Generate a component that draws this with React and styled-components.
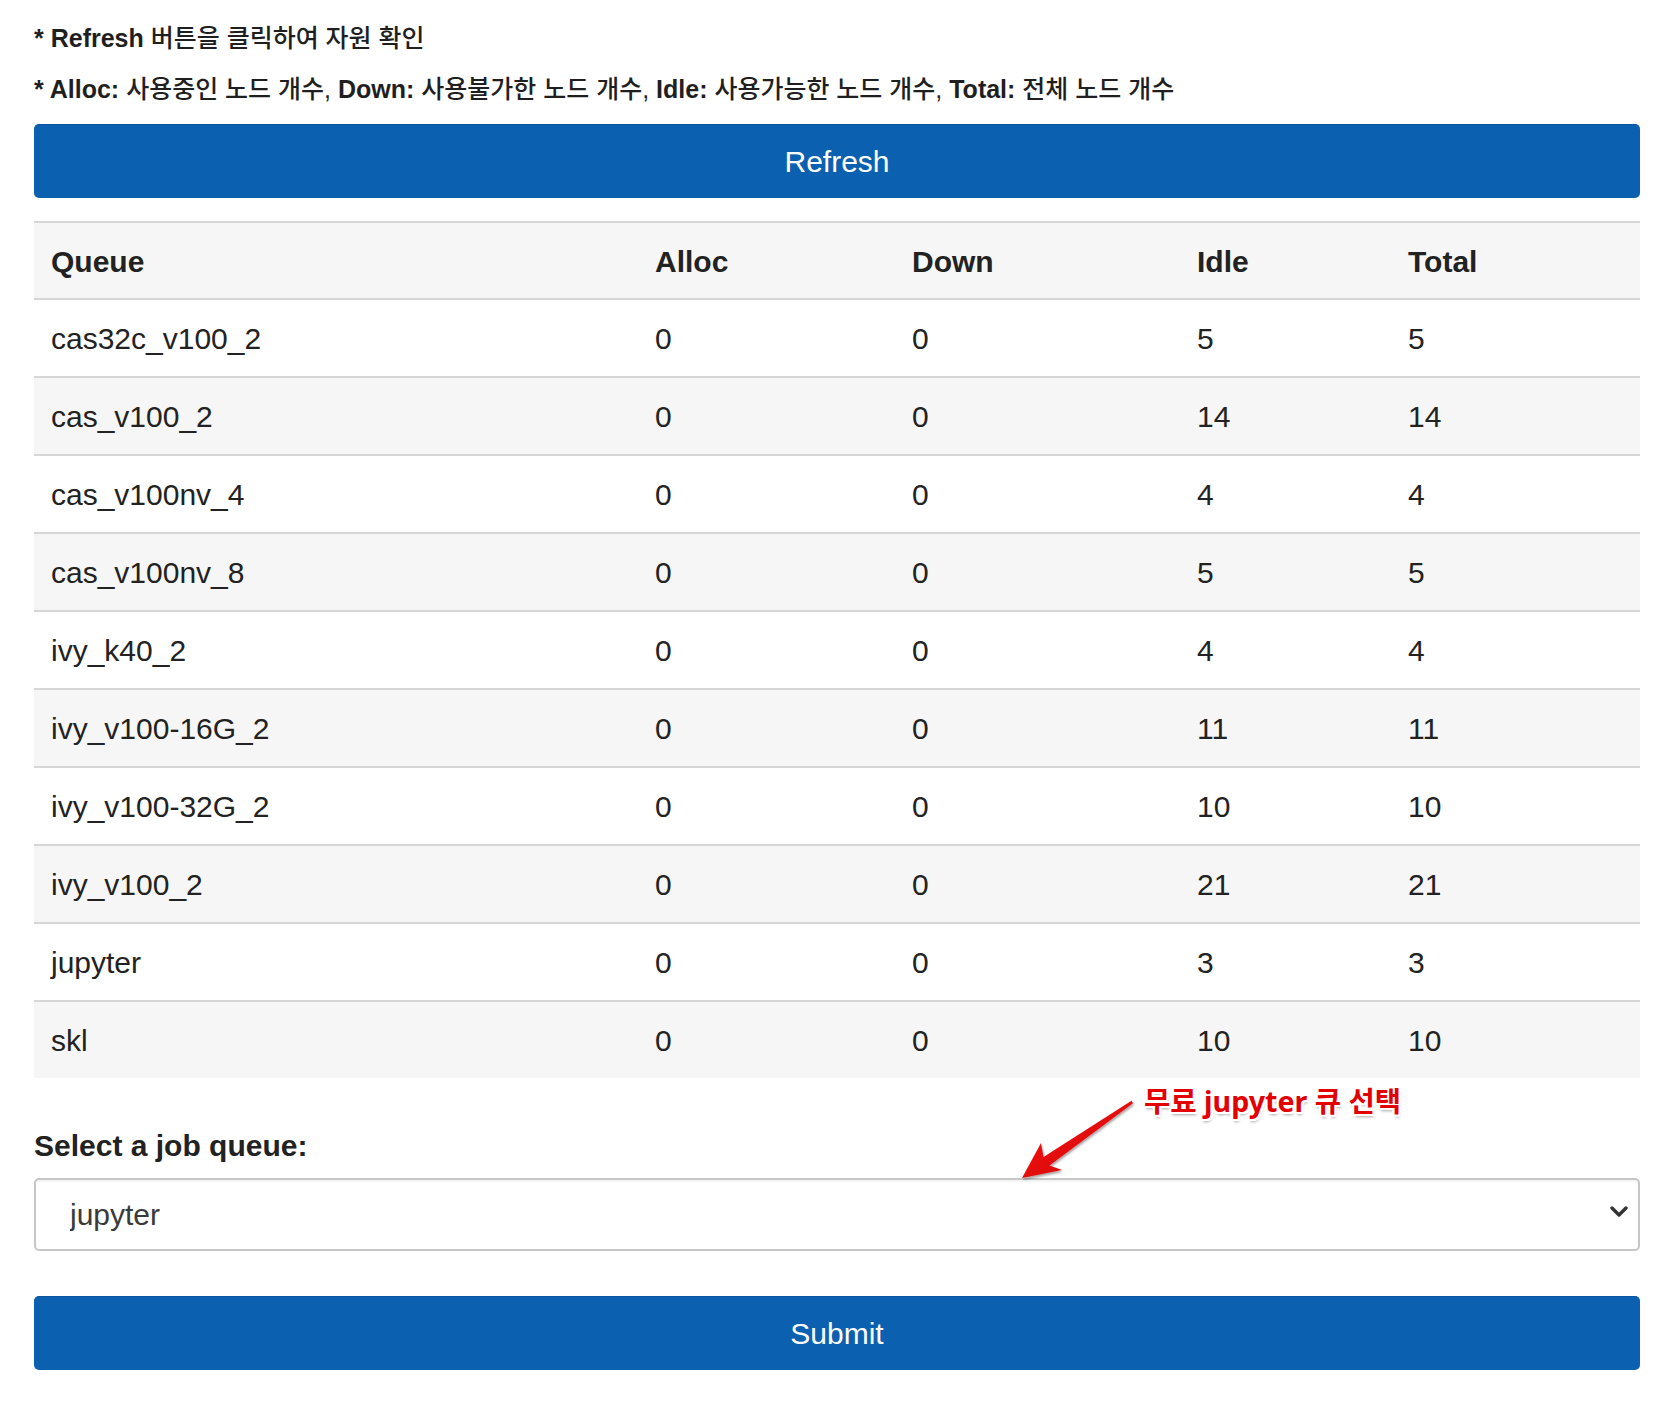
import React from "react";
import styled, { createGlobalStyle } from "styled-components";

const Global = createGlobalStyle`
  html, body { margin: 0; padding: 0; background: #fff; }
  body { font-family: "Liberation Sans", Arial, "Noto Sans CJK KR", sans-serif; color: #222; }
`;

const Page = styled.div`
  position: relative;
  width: 1606px;
  margin: 0 34px;
  padding-top: 23px;
  padding-bottom: 38px;
`;

const Note = styled.p`
  margin: 0 0 ${(p) => p.$mb || "20px"};
  font-size: 25px;
  line-height: 31px;
  color: #1f1f1f;
  white-space: nowrap;
  font-weight: 500;
  font-family: "Liberation Sans", Arial, "Noto Sans CJK KR", sans-serif;
  b { font-weight: 700; }
`;

const Button = styled.button`
  display: block;
  width: 100%;
  height: 74px;
  margin: ${(p) => p.$mt || "0"} 0 0;
  border: none;
  border-top: 1px solid #0a559f;
  border-radius: 5px;
  background: #0c60b0;
  color: #fff;
  font-family: "Liberation Sans", Arial, sans-serif;
  font-size: 30px;
  line-height: 36px;
  cursor: pointer;
`;

const Table = styled.table`
  width: 100%;
  margin-top: 23px;
  border-collapse: separate;
  border-spacing: 0;
  table-layout: fixed;
  font-size: 30px;
  line-height: 36px;
`;

const Th = styled.th`
  box-sizing: border-box;
  width: ${(p) => p.$w}px;
  text-align: left;
  font-weight: 700;
  color: #222;
  background: #f6f6f6;
  padding: 21px 17px 18px;
  border-top: 2px solid #d6d6d6;
  border-bottom: 2px solid #d6d6d6;
`;

const Row = styled.tr`
  background: ${(p) => (p.$striped ? "#f6f6f6" : "#fff")};
`;

const Td = styled.td`
  padding: 21px 17px 19px;
  color: #222;
  white-space: nowrap;
  border-bottom: ${(p) => (p.$last ? "none" : "2px solid #d6d6d6")};
`;

const Label = styled.div`
  margin-top: 50px;
  font-size: 30px;
  line-height: 36px;
  font-weight: 700;
  color: #222;
`;

const SelectWrap = styled.div`
  position: relative;
  margin-top: 14px;
`;

const Select = styled.select`
  appearance: none;
  -webkit-appearance: none;
  display: block;
  width: 100%;
  height: 73px;
  box-sizing: border-box;
  padding: 0 60px 0 34px;
  border: 2px solid #c6c6c6;
  border-radius: 5px;
  box-shadow: inset 0 2px 2px rgba(0, 0, 0, 0.05);
  background: #fff;
  color: #3a3a3a;
  font-family: "Liberation Sans", Arial, sans-serif;
  font-size: 30px;
`;

const Chevron = styled.svg`
  position: absolute;
  right: 12px;
  top: 27px;
  pointer-events: none;
`;

const Annotation = styled.div`
  position: absolute;
  left: 1110px;
  top: 1083px;
  font-family: "Noto Sans", "Noto Sans CJK KR", sans-serif;
  font-weight: 700;
  font-size: 28.6px;
  line-height: 36px;
  color: #e30000;
  white-space: nowrap;
  text-shadow:
    -2px 0 0 #fff, 2px 0 0 #fff, 0 -2px 0 #fff, 0 2px 0 #fff,
    -2px -2px 0 #fff, 2px -2px 0 #fff, -2px 2px 0 #fff, 2px 2px 0 #fff,
    1px 3px 3px rgba(0, 0, 0, 0.35);
`;

const Arrow = styled.svg`
  position: absolute;
  left: 976px;
  top: 1090px;
  overflow: visible;
  pointer-events: none;
`;

const cols = [
  { key: "Queue", w: 604 },
  { key: "Alloc", w: 257 },
  { key: "Down", w: 285 },
  { key: "Idle", w: 211 },
  { key: "Total", w: 249 },
];

const rows = [
  ["cas32c_v100_2", 0, 0, 5, 5],
  ["cas_v100_2", 0, 0, 14, 14],
  ["cas_v100nv_4", 0, 0, 4, 4],
  ["cas_v100nv_8", 0, 0, 5, 5],
  ["ivy_k40_2", 0, 0, 4, 4],
  ["ivy_v100-16G_2", 0, 0, 11, 11],
  ["ivy_v100-32G_2", 0, 0, 10, 10],
  ["ivy_v100_2", 0, 0, 21, 21],
  ["jupyter", 0, 0, 3, 3],
  ["skl", 0, 0, 10, 10],
];

export default function App() {
  return (
    <>
      <Global />
      <Page>
        <Note>
          <b>* Refresh</b> 버튼을 클릭하여 자원 확인
        </Note>
        <Note $mb="19px">
          <b>* Alloc:</b> 사용중인 노드 개수, <b>Down:</b> 사용불가한 노드 개수,{" "}
          <b>Idle:</b> 사용가능한 노드 개수, <b>Total:</b> 전체 노드 개수
        </Note>
        <Button>Refresh</Button>
        <Table>
          <thead>
            <tr>
              {cols.map((c) => (
                <Th key={c.key} $w={c.w}>
                  {c.key}
                </Th>
              ))}
            </tr>
          </thead>
          <tbody>
            {rows.map((r, i) => (
              <Row key={r[0]} $striped={i % 2 === 1}>
                {r.map((v, j) => (
                  <Td key={j} $last={i === rows.length - 1}>
                    {v}
                  </Td>
                ))}
              </Row>
            ))}
          </tbody>
        </Table>
        <Label>Select a job queue:</Label>
        <SelectWrap>
          <Select defaultValue="jupyter">
            {rows.map((r) => (
              <option key={r[0]} value={r[0]}>
                {r[0]}
              </option>
            ))}
          </Select>
          <Chevron width="18" height="14" viewBox="0 0 18 14">
            <path d="M2 3 L9 10 L16 3" fill="none" stroke="#333" strokeWidth="3.4" strokeLinecap="round" strokeLinejoin="round" />
          </Chevron>
        </SelectWrap>
        <Button $mt="45px">Submit</Button>

        <Arrow width="135" height="100" viewBox="0 0 135 100">
          <defs>
            <linearGradient id="ag" x1="0" y1="0" x2="1" y2="1">
              <stop offset="0" stopColor="#ff1a1a" />
              <stop offset="1" stopColor="#c80000" />
            </linearGradient>
            <filter id="as" x="-20%" y="-20%" width="140%" height="140%">
              <feDropShadow dx="1" dy="2" stdDeviation="1.2" floodColor="#000" floodOpacity="0.35" />
            </filter>
          </defs>
          <polygon
            points="12,88 31,53 33.5,67 121.5,10.8 123,13.2 39.5,75.5 52,80"
            fill="url(#ag)"
            filter="url(#as)"
          />
        </Arrow>
        <Annotation>무료 jupyter 큐 선택</Annotation>
      </Page>
    </>
  );
}
